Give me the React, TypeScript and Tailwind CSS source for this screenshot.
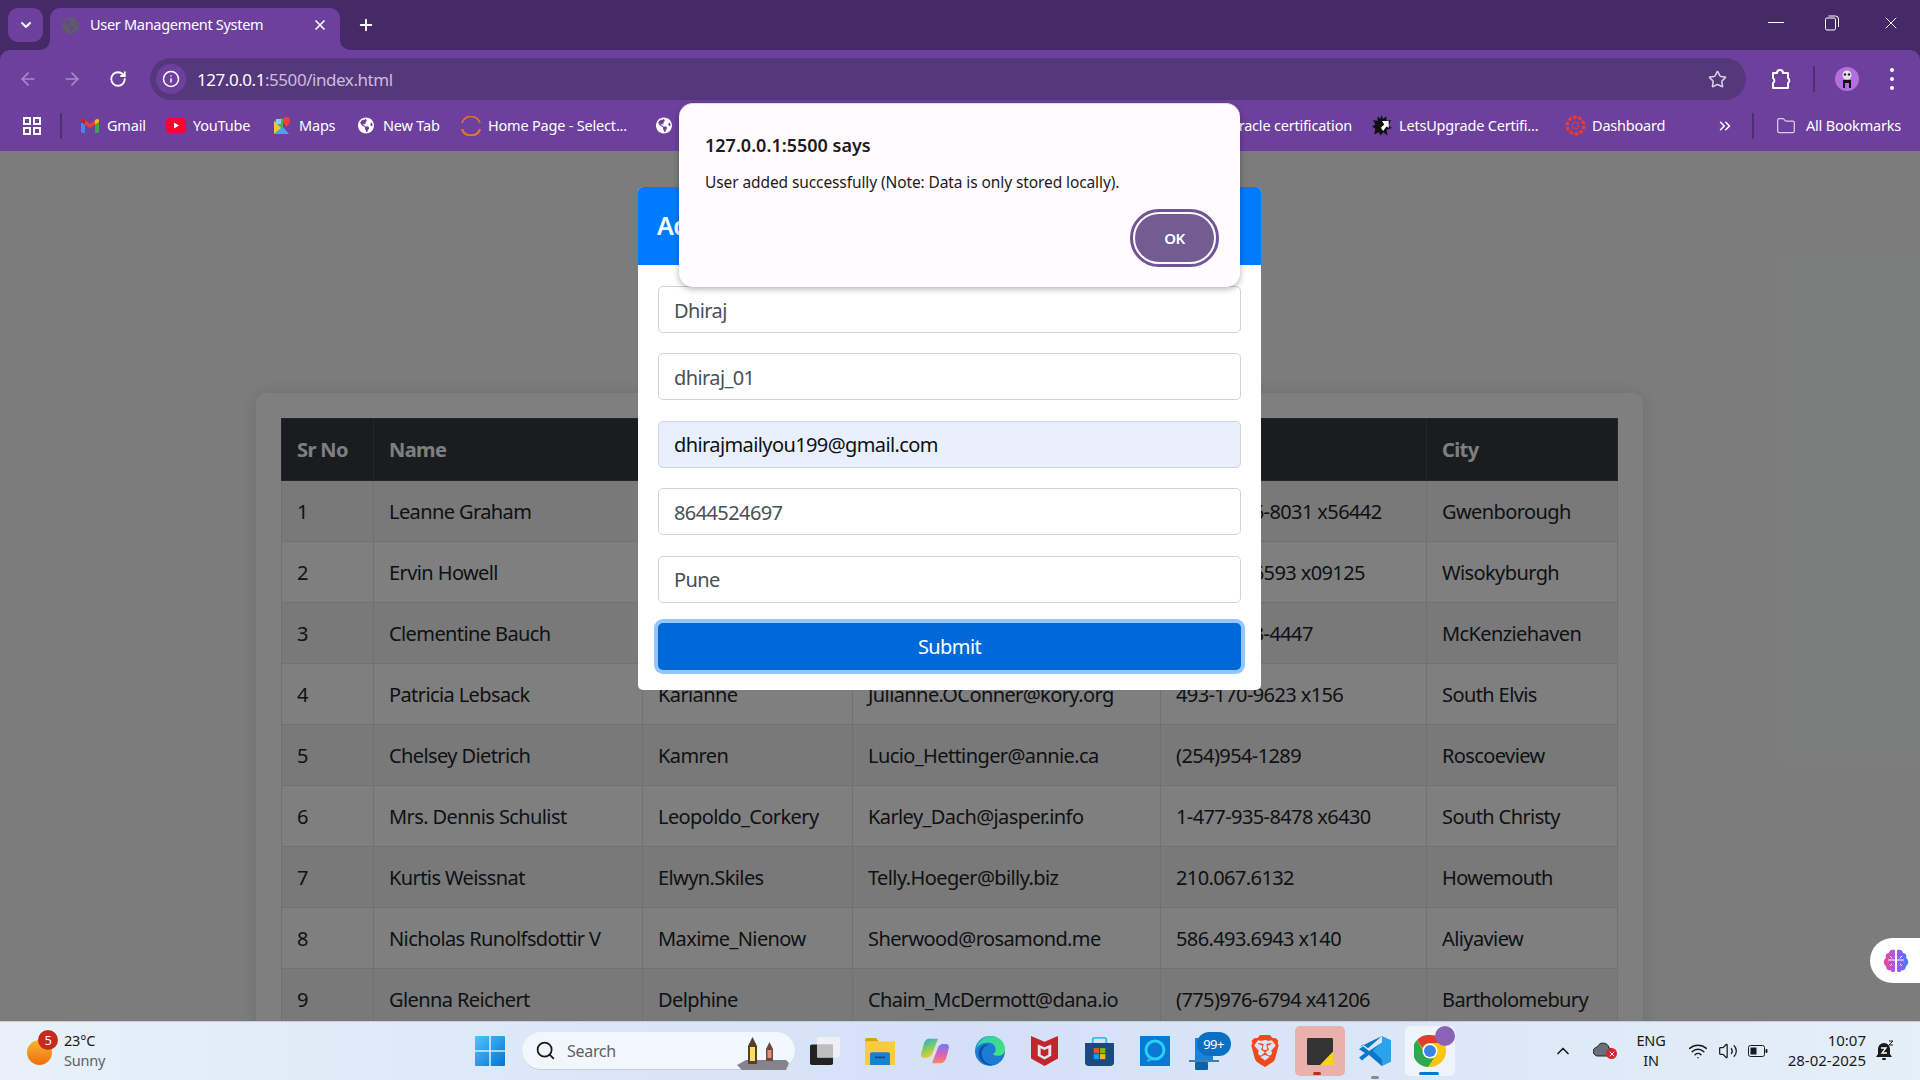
import React from "react";
import {
  ArrowLeft,
  ArrowRight,
  ChevronDown,
  ChevronUp,
  ChevronsRight,
  Folder,
  Info,
  Plus,
  RotateCw,
  Search,
  Star,
  Volume2,
  Wifi,
  X,
} from "lucide-react";
import { FaGlobeAmericas } from "react-icons/fa";
import { SiBrave } from "react-icons/si";

const rows = [
  ["1", "Leanne Graham", "Bret", "Sincere@april.biz", "1-770-736-8031 x56442", "Gwenborough"],
  ["2", "Ervin Howell", "Antonette", "Shanna@melissa.tv", "010-692-6593 x09125", "Wisokyburgh"],
  ["3", "Clementine Bauch", "Samantha", "Nathan@yesenia.net", "1-463-123-4447", "McKenziehaven"],
  ["4", "Patricia Lebsack", "Karianne", "Julianne.OConner@kory.org", "493-170-9623 x156", "South Elvis"],
  ["5", "Chelsey Dietrich", "Kamren", "Lucio_Hettinger@annie.ca", "(254)954-1289", "Roscoeview"],
  ["6", "Mrs. Dennis Schulist", "Leopoldo_Corkery", "Karley_Dach@jasper.info", "1-477-935-8478 x6430", "South Christy"],
  ["7", "Kurtis Weissnat", "Elwyn.Skiles", "Telly.Hoeger@billy.biz", "210.067.6132", "Howemouth"],
  ["8", "Nicholas Runolfsdottir V", "Maxime_Nienow", "Sherwood@rosamond.me", "586.493.6943 x140", "Aliyaview"],
  ["9", "Glenna Reichert", "Delphine", "Chaim_McDermott@dana.io", "(775)976-6794 x41206", "Bartholomebury"],
];

const headers = ["Sr No", "Name", "Username", "Email", "Phone", "City"];

function Bookmark({ icon, label, className }: { icon: React.ReactNode; label: string; className: string }) {
  return (
    <div className={`flex items-center gap-[9px] shrink-0 ${className}`}>
      <span className="w-4 h-4 flex items-center justify-center shrink-0">{icon}</span>
      <span className="text-[14.5px] tracking-[-0.2px] text-white whitespace-nowrap">{label}</span>
    </div>
  );
}

function Globe({ className = "text-white" }: { className?: string }) {
  return <FaGlobeAmericas size={17} className={className} />;
}

function GmailIcon() {
  return (
    <svg width="18" height="14" viewBox="0 0 18 14" className="shrink-0">
      <path d="M0 3v9.500A1.500 1.500 0 0 0 1.500 14H4V5z" fill="#4285f4" />
      <path d="M14 5v9h2.500a1.500 1.500 0 0 0 1.500-1.500V3z" fill="#34a853" />
      <path d="M4 5.500 9 9l5-3.500V1L9 5 4 1z" fill="#ea4335" />
      <path d="M0 3l4 2.500V1L2.500.2A1.600 1.600 0 0 0 0 1.500z" fill="#c5221f" />
      <path d="M18 3l-4 2.500V1l1.500-.8A1.600 1.600 0 0 1 18 1.500z" fill="#fbbc04" />
    </svg>
  );
}

function YoutubeIcon() {
  return (
    <svg width="20" height="15" viewBox="0 0 20 15" className="shrink-0">
      <rect width="20" height="15" rx="4" fill="#ff0033" />
      <path d="M8 4.500l5 3-5 3z" fill="#fff" />
    </svg>
  );
}

function MapsIcon() {
  return (
    <svg width="18" height="18" viewBox="0 0 18 18" className="shrink-0">
      <path d="M1 4l9-3v16H1z" fill="#4caf50" />
      <path d="M1 4l7 7-7 6z" fill="#fbc02d" />
      <path d="M1 17l9-7 6 7z" fill="#42a5f5" />
      <path d="M3 2h5v5H3z" fill="#90caf9" />
      <path d="M13.500 0a3.600 3.600 0 0 0-3.600 3.600c0 2.600 3.600 6.400 3.600 6.400s3.600-3.800 3.600-6.400A3.600 3.600 0 0 0 13.500 0z" fill="#ea4335" />
    </svg>
  );
}

function SelectIcon() {
  return (
    <svg width="20" height="20" viewBox="0 0 20 20" fill="none" className="shrink-0">
      <path d="M1 7a9.500 9.500 0 0 1 18 0" stroke="#e8742a" strokeWidth="1.600" />
      <path d="M1 13a9.500 9.500 0 0 0 18 0" stroke="#e8742a" strokeWidth="2.200" />
    </svg>
  );
}

function LetsUpgradeIcon() {
  return (
    <svg width="20" height="23" viewBox="0 0 18 20" className="shrink-0">
      <path d="M8 0l2 4 3-2 0 4 4-1-2 5 3 2-5 2 1 5-4-3-2 3-2-3-4 2 1-5-3-2 3-2-2-4 4 1 0-4 3 2z" fill="#111" />
      <path d="M9 6h6v6l-2-1-3 4-2-3 3-3z" fill="#fff" />
    </svg>
  );
}

function DashboardIcon() {
  return (
    <svg width="21" height="21" viewBox="0 0 20 20" fill="none" stroke="#ef3a2c" strokeWidth="3" className="shrink-0">
      <circle cx="10" cy="10" r="8" strokeDasharray="3.500 1.500" />
      <circle cx="10" cy="10" r="3" strokeWidth="1.500" strokeDasharray="2 1" />
    </svg>
  );
}

function ExtensionsIcon() {
  return (
    <svg width="20" height="22" viewBox="0 0 20 22" fill="none" stroke="#fff" strokeWidth="2" strokeLinejoin="round">
      <path d="M2 5h4a3 3 0 0 1 6 0h5v5a3 3 0 0 1 0 5v5H2v-5a3 3 0 0 0 0-5z" />
    </svg>
  );
}

function Avatar() {
  return (
    <div className="w-6 h-6 rounded-full bg-[#b36fe0] flex items-center justify-center">
      <svg width="14" height="18" viewBox="0 0 14 18">
        <circle cx="7" cy="5" r="4.500" fill="#e6e6e6" />
        <circle cx="5" cy="4.500" r="1.200" fill="#222" />
        <circle cx="9" cy="4.500" r="1.200" fill="#222" />
        <path d="M3 10h8v8H9v-5H5v5H3z" fill="#111" />
      </svg>
    </div>
  );
}

function RestoreIcon() {
  return (
    <svg width="14" height="16" viewBox="0 0 14 16" fill="none" stroke="#fff" strokeWidth="1">
      <rect x="0.500" y="3" width="10" height="12" rx="1.500" />
      <path d="M3.500 1h7a3 3 0 0 1 3 3v8" />
    </svg>
  );
}

function WindowsLogo() {
  return (
    <svg width="30" height="30" viewBox="0 0 30 30">
      <defs>
        <linearGradient id="win" x1="0" y1="0" x2="1" y2="1">
          <stop offset="0" stopColor="#4cc5fb" />
          <stop offset="1" stopColor="#0672d3" />
        </linearGradient>
      </defs>
      <path d="M0 1a1 1 0 0 1 1-1h13.200v14.200H0zM15.800 0H29a1 1 0 0 1 1 1v13.200H15.800zM0 15.800h14.200V30H1a1 1 0 0 1-1-1zM15.800 15.800H30V29a1 1 0 0 1-1 1H15.800z" fill="url(#win)" />
    </svg>
  );
}

function Lanterns() {
  return (
    <svg width="56" height="38" viewBox="0 0 56 38">
      <path d="M3 33l9-5h40l3 3-3 7H8z" fill="#85838c" />
      <path d="M14 14l4.500-9 4.500 9v18h-9z" fill="#55402e" />
      <rect x="16" y="15" width="5" height="14" fill="#f9dc6a" />
      <path d="M32 17l3.500-7 3.500 7v12h-7z" fill="#6a4a3c" />
      <rect x="33.500" y="18" width="4" height="8" fill="#ea8a7c" />
    </svg>
  );
}

function TaskViewIcon() {
  return (
    <svg width="30" height="28" viewBox="0 0 30 34" preserveAspectRatio="none">
      <rect x="0" y="9" width="23" height="25" rx="2" fill="#222" />
      <rect x="7" y="0" width="23" height="25" rx="2" fill="#f2f2f2" opacity="0.85" />
      <rect x="7" y="9" width="16" height="16" fill="#bdbdbd" />
    </svg>
  );
}

function ExplorerIcon() {
  return (
    <svg width="30" height="27" viewBox="0 0 30 32" preserveAspectRatio="none">
      <path d="M0 2a2 2 0 0 1 2-2h9l3 4H0z" fill="#dca20b" />
      <path d="M0 4h30v28H0z" fill="#f9cb3f" />
      <path d="M5 19a2 2 0 0 1 2-2h16a2 2 0 0 1 2 2v13H5z" fill="#1a80d0" />
      <rect x="10" y="22" width="10" height="2" fill="#0d4d8c" />
    </svg>
  );
}

function CopilotIcon() {
  return (
    <svg width="28" height="26" viewBox="0 0 28 30" preserveAspectRatio="none">
      <defs>
        <linearGradient id="copA" x1="0" y1="0" x2="0.4" y2="1">
          <stop offset="0" stopColor="#2e9bf0" />
          <stop offset="0.55" stopColor="#7ccf5c" />
          <stop offset="1" stopColor="#f3c83a" />
        </linearGradient>
        <linearGradient id="copB" x1="0.5" y1="0" x2="0.5" y2="1">
          <stop offset="0" stopColor="#6f7df2" />
          <stop offset="0.6" stopColor="#e55fb2" />
          <stop offset="1" stopColor="#f58a5a" />
        </linearGradient>
      </defs>
      <path d="M8 1h9l-5 15c-1 4-3 7-6 7H3c-2 0-3-2-3-4l3-13c1-3 3-5 5-5z" fill="url(#copA)" />
      <path d="M20 29h-9l5-15c1-4 3-7 6-7h3c2 0 3 2 3 4l-3 13c-1 3-3 5-5 5z" fill="url(#copB)" />
    </svg>
  );
}

function EdgeIcon() {
  return (
    <svg width="30" height="30" viewBox="0 0 32 32">
      <defs>
        <linearGradient id="edg" x1="0" y1="0" x2="1" y2="1">
          <stop offset="0" stopColor="#2ecfb0" />
          <stop offset="1" stopColor="#4ce37a" />
        </linearGradient>
      </defs>
      <circle cx="16" cy="16" r="16" fill="#1b7cd6" />
      <path d="M1 14C3 5 10 0 17 0c9 0 15 7 15 14 0 5-4 7-8 7-3 0-5-1-5-2 2-1 3-2 3-5 0-4-4-7-8-7-6 0-11 3-13 7z" fill="url(#edg)" />
      <path d="M15 9c-5 1-8 5-8 10 0 6 5 11 12 12-6 1-13-3-15-10C3 14 8 8 15 9z" fill="#0f4f9c" />
    </svg>
  );
}

function McAfeeIcon() {
  return (
    <svg width="27" height="30" viewBox="0 0 28 32" preserveAspectRatio="none">
      <path d="M0 0l14 6 14-6v24l-14 8-14-8z" fill="#c0272d" />
      <path d="M7 9l7 3 7-3v12l-7 4-7-4z" fill="#dfe8f6" />
      <path d="M10 13l4 2 4-2v7l-4 2-4-2z" fill="#c0272d" />
    </svg>
  );
}

function StoreIcon() {
  return (
    <svg width="29" height="29" viewBox="0 0 30 34" fill="none" preserveAspectRatio="none">
      <path d="M8 8V3a2 2 0 0 1 2-2h10a2 2 0 0 1 2 2v5" stroke="#38bdf0" strokeWidth="2" />
      <path d="M0 7h30v23a4 4 0 0 1-4 4H4a4 4 0 0 1-4-4z" fill="#1c4a80" />
      <rect x="9" y="13" width="5.500" height="6" fill="#f25022" />
      <rect x="15.500" y="13" width="5.500" height="6" fill="#7fba00" />
      <rect x="9" y="20" width="5.500" height="6" fill="#00a4ef" />
      <rect x="15.500" y="20" width="5.500" height="6" fill="#ffb900" />
    </svg>
  );
}

function AlexaIcon() {
  return (
    <svg width="30" height="30" viewBox="0 0 30 30" fill="none">
      <rect width="30" height="30" fill="#0b78d1" />
      <circle cx="15" cy="14" r="9" stroke="#27d0f5" strokeWidth="3" />
      <path d="M8 23l-1 3 5-2" fill="#27d0f5" />
    </svg>
  );
}

function OutlookIcon() {
  return (
    <div className="relative w-[42px] h-[38px]">
      <svg width="30" height="32" viewBox="0 0 30 32" className="absolute left-0 top-[6px]">
        <rect x="6" y="0" width="18" height="22" fill="#1b83d6" />
        <rect x="0" y="22" width="30" height="2" fill="#3c7fb0" />
        <rect x="6" y="24" width="13" height="8" rx="1" fill="#0e62ad" />
      </svg>
      <span className="absolute right-0 top-0 h-6 w-[34px] rounded-full bg-[#0b6fc4] text-white text-[13px] leading-6 text-center">
        99+
      </span>
    </div>
  );
}

function StickyIcon() {
  return (
    <svg width="26" height="27" viewBox="0 0 26 32" preserveAspectRatio="none">
      <rect width="26" height="32" rx="1.500" fill="#333" />
      <path d="M26 16v16H13z" fill="#f7d21d" />
    </svg>
  );
}

function VsCodeIcon() {
  return (
    <svg width="32" height="30" viewBox="0 0 32 32" preserveAspectRatio="none">
      <path d="M23 0l9 4.500v23L23 32 10 20l13-13V0z" fill="#2aa3ea" />
      <path d="M23 0v7L10 16 4 11 0 14l6 4-6 5 3 3 7-6 13 12 0-7-9-9 9-9V0L9 13 4 9 0 12" fill="#0a78c9" />
    </svg>
  );
}

function ChromeIcon() {
  return (
    <svg width="32" height="32" viewBox="0 0 32 32">
      <circle cx="16" cy="16" r="16" fill="#f8c513" />
      <path d="M16 0a16 16 0 0 1 13.900 8H16a8 8 0 0 0-7.500 5L3 5a16 16 0 0 1 13-5z" fill="#e33b2e" />
      <path d="M3 5l8 14a8 8 0 0 0 9 4l-6 9A16 16 0 0 1 3 5z" fill="#2da94f" />
      <circle cx="16" cy="16" r="7.500" fill="#fff" />
      <circle cx="16" cy="16" r="6" fill="#3b82e6" />
    </svg>
  );
}

function WeatherIcon() {
  return (
    <div className="relative w-[26px] h-[30px]">
      <div className="absolute left-0 top-[4px] w-[25px] h-[25px] rounded-full bg-gradient-to-b from-[#f5b62e] to-[#ef6c0d]" />
      <div className="absolute left-[11px] -top-[6px] w-5 h-5 rounded-full bg-[#c42b1c] text-white text-[13px] leading-5 text-center">
        5
      </div>
    </div>
  );
}

function BrainIcon() {
  return (
    <svg width="26" height="26" viewBox="0 0 26 26" fill="none">
      <defs>
        <linearGradient id="brain" x1="0" y1="0" x2="1" y2="0">
          <stop offset="0" stopColor="#ec4899" />
          <stop offset="0.5" stopColor="#a855f7" />
          <stop offset="1" stopColor="#3b82f6" />
        </linearGradient>
      </defs>
      <path d="M12 2C8 1 6 3 6 5 3 5 2 8 3 10c-3 2-3 6 0 8 0 3 2 5 4 4 1 2 4 3 5 1zM14 2c4-1 6 1 6 3 3 0 4 3 3 5 3 2 3 6 0 8 0 3-2 5-4 4-1 2-4 3-5 1z" fill="url(#brain)" />
      <path d="M5 12h7M7 8l2 2M7 18l2-2M14 12h7M19 8l-2 2M19 18l-2-2" stroke="#fff" strokeWidth="1" />
    </svg>
  );
}

function CloudErrorIcon() {
  return (
    <div className="relative w-5 h-5">
      <svg width="20" height="16" viewBox="0 0 20 16" className="absolute top-0 left-0">
        <path d="M5 15a4.500 4.500 0 0 1-.5-9A6 6 0 0 1 16 7a4 4 0 0 1 0 8z" fill="#6b7078" stroke="#222" strokeWidth="1" />
      </svg>
      <div className="absolute -right-1 top-[7px] w-[11px] h-[11px] rounded-full bg-[#d92432] flex items-center justify-center">
        <X size={8} strokeWidth={3} className="text-white" />
      </div>
    </div>
  );
}

function BatteryIcon() {
  return (
    <svg width="20" height="12" viewBox="0 0 20 12" fill="none">
      <rect x="0.500" y="0.500" width="16" height="11" rx="2" stroke="#1a1a1a" />
      <rect x="2.500" y="2.500" width="6" height="7" fill="#1a1a1a" />
      <rect x="17.500" y="4" width="2" height="4" rx="1" fill="#1a1a1a" />
    </svg>
  );
}

function SnoozeBell() {
  return (
    <svg width="20" height="22" viewBox="0 0 20 22">
      <path d="M9 3a6 6 0 0 0-6 6v5l-2 3h16l-2-3V9a6 6 0 0 0-6-6z" fill="#1a1a1a" />
      <rect x="7" y="18" width="4" height="2" rx="1" fill="#1a1a1a" />
      <path d="M6 8h5l-4 5h5" stroke="#fff" strokeWidth="1.300" fill="none" />
      <path d="M14 1h4l-4 4h4" stroke="#1a1a1a" strokeWidth="1" fill="none" />
    </svg>
  );
}

function Slot({ children, className = "" }: { children: React.ReactNode; className?: string }) {
  return <div className={`w-[55px] h-full flex items-center justify-center shrink-0 ${className}`}>{children}</div>;
}

function Field({ value, filled }: { value: string; filled?: boolean }) {
  return (
    <div
      className={`h-[47px] border border-[#ced4da] rounded-[5px] px-[15px] pt-[2px] flex items-center text-[20px] ${
        filled ? "bg-[#e8f0fe] text-[#111]" : "bg-white text-[#495057]"
      }`}
    >
      {value}
    </div>
  );
}

export default function App() {
  return (
    <div className="relative h-screen w-full overflow-hidden flex flex-col font-['Noto_Sans',sans-serif] tracking-[-0.6px] bg-[#462a68]">
      {/* tab strip */}
      <div className="h-[50px] shrink-0 flex items-start pl-2 text-white">
        <div className="mt-2 w-[35px] h-[34px] rounded-[10px] bg-[#6d409e] flex items-center justify-center">
          <ChevronDown size={16} strokeWidth={3} />
        </div>
        <div className="relative mt-[8px] ml-[7px] w-[290px] h-[42px] rounded-t-[10px] bg-[#6d409e] flex items-center pl-[12px] pr-[12px] pb-[8px]">
          <FaGlobeAmericas size={17} className="text-[#5b5f63] shrink-0" />
          <span className="ml-[11px] text-[14.5px] tracking-[-0.3px] flex-1 whitespace-nowrap">User Management System</span>
          <X size={16} strokeWidth={2.5} />
          <div className="absolute -right-[10px] bottom-0 w-[10px] h-[10px] bg-[#6d409e]">
            <div className="w-full h-full rounded-bl-[10px] bg-[#462a68]" />
          </div>
          <div className="absolute -left-[10px] bottom-0 w-[10px] h-[10px] bg-[#6d409e]">
            <div className="w-full h-full rounded-br-[10px] bg-[#462a68]" />
          </div>
        </div>
        <div className="mt-[16px] ml-[17px]">
          <Plus size={18} strokeWidth={2.5} />
        </div>
        <div className="ml-auto flex items-start mt-[14px] pr-[19px]">
          <div className="w-[16px] h-[1px] mt-[8px] bg-white" />
          <div className="ml-[41px] mt-[1px]">
            <RestoreIcon />
          </div>
          <div className="ml-[42px]">
            <X size={20} strokeWidth={1.2} className="-mt-[1px]" />
          </div>
        </div>
      </div>

      {/* toolbar */}
      <div className="h-[58px] shrink-0 bg-[#6d409e] rounded-t-[10px] flex items-start pt-2 text-white">
        <div className="w-[150px] h-[42px] flex items-center pl-[18px]">
          <ArrowLeft size={20} className="text-[#a88cc8]" />
          <ArrowRight size={20} className="ml-[24px] text-[#a88cc8]" />
          <RotateCw size={18} strokeWidth={2.4} className="ml-[27px]" />
        </div>
        <div className="w-[1596px] h-[42px] rounded-full bg-[#55377b] flex items-center pl-[6px] pr-[19px]">
          <div className="w-[30px] h-[30px] rounded-full bg-[#6d409e] flex items-center justify-center">
            <Info size={18} />
          </div>
          <div className="ml-[11px] text-[17px] tracking-[-0.45px] flex-1 whitespace-nowrap pt-[1px]">
            127.0.0.1<span className="text-[#cbbedb]">:5500/index.html</span>
          </div>
          <Star size={19} className="text-[#d9d0e3]" />
        </div>
        <div className="flex-1 h-[42px] flex items-center pl-[25px]">
          <ExtensionsIcon />
          <div className="ml-[22px] w-[2px] h-[26px] bg-[#4d2f74]" />
          <div className="ml-[20px]">
            <Avatar />
          </div>
          <div className="ml-[31px] flex flex-col gap-[5px]">
            <div className="w-1 h-1 rounded-full bg-white" />
            <div className="w-1 h-1 rounded-full bg-white" />
            <div className="w-1 h-1 rounded-full bg-white" />
          </div>
        </div>
      </div>

      {/* bookmarks */}
      <div className="h-[43px] shrink-0 bg-[#6d409e] flex items-center pb-[8px] text-white">
        <div className="ml-[23px] w-[18px] h-[18px] grid grid-cols-2 gap-[2px]">
          <div className="border-2 border-white" />
          <div className="border-2 border-white" />
          <div className="border-2 border-white" />
          <div className="border-2 border-white" />
        </div>
        <div className="ml-[19px] w-[2px] h-[26px] bg-[#4d2f74]" />
        <div className="ml-[20px] flex items-center">
          <Bookmark icon={<GmailIcon />} label="Gmail" className="w-[86px]" />
          <Bookmark icon={<YoutubeIcon />} label="YouTube" className="w-[106px]" />
          <Bookmark icon={<MapsIcon />} label="Maps" className="w-[84px]" />
          <Bookmark icon={<Globe />} label="New Tab" className="w-[105px]" />
          <Bookmark icon={<SelectIcon />} label="Home Page - Select..." className="w-[193px]" />
          <Bookmark icon={<Globe />} label="" className="w-[40px]" />
        </div>
        <div className="ml-auto flex items-center pr-[19px]">
          <span className="text-[14.5px] tracking-[-0.2px] whitespace-nowrap mr-[22px]">Oracle certification</span>
          <Bookmark icon={<LetsUpgradeIcon />} label="LetsUpgrade Certifi..." className="w-[193px]" />
          <Bookmark icon={<DashboardIcon />} label="Dashboard" className="w-[143px]" />
          <div className="w-[30px] flex justify-center">
            <ChevronsRight size={18} />
          </div>
          <div className="ml-[12px] w-[2px] h-[26px] bg-[#4d2f74]" />
          <div className="ml-[22px] flex items-center gap-[10px]">
            <Folder size={20} strokeWidth={1.5} className="text-[#d9d0e3]" />
            <span className="text-[14.5px] tracking-[-0.2px] whitespace-nowrap">All Bookmarks</span>
          </div>
        </div>
      </div>

      {/* page */}
      <div className="relative flex-1 min-h-0 overflow-hidden bg-[#f8f9fa]">
        <div className="mt-[242px] ml-[256px] w-[1387px] bg-white rounded-[10px] p-[25px] shadow-[0_0_18px_rgba(0,0,0,0.12)]">
          <table className="w-[1336px] table-fixed border-collapse text-[20px] text-[#212529]">
            <colgroup>
              <col className="w-[92px]" />
              <col className="w-[269px]" />
              <col className="w-[210px]" />
              <col className="w-[308px]" />
              <col className="w-[266px]" />
              <col className="w-[191px]" />
            </colgroup>
            <thead>
              <tr className="bg-[#343a40] text-white h-[62px]">
                {headers.map((h) => (
                  <th key={h} className="px-[15px] text-left font-bold border border-[#454d55] whitespace-nowrap">
                    {h}
                  </th>
                ))}
              </tr>
            </thead>
            <tbody>
              {rows.map((row, i) => (
                <tr key={row[0]} className={`h-[61px] ${i % 2 === 0 ? "bg-[#f2f2f2]" : "bg-white"}`}>
                  {row.map((cell, j) => (
                    <td key={j} className="px-[15px] pt-[2px] border border-[#dee2e6] whitespace-nowrap">
                      {cell}
                    </td>
                  ))}
                </tr>
              ))}
            </tbody>
          </table>
        </div>

        {/* backdrop */}
        <div className="absolute inset-0 bg-black/50" />

        {/* side widget */}
        <div className="absolute right-0 bottom-[38px] w-[50px] h-[45px] rounded-l-full bg-white flex items-center pl-[13px]">
          <BrainIcon />
        </div>

        {/* add user modal */}
        <div className="absolute left-[638px] top-[36px] w-[623px] bg-white rounded-[5px] overflow-hidden">
          <div className="h-[78px] bg-[#007bff] text-white flex items-center px-[19px] text-[25px] font-semibold">Add User</div>
          <div className="px-[20px] pt-[21px] pb-[20px] flex flex-col gap-[20.4px]">
            <Field value="Dhiraj" />
            <Field value="dhiraj_01" />
            <Field value="dhirajmailyou199@gmail.com" filled />
            <Field value="8644524697" />
            <Field value="Pune" />
            <div className="h-[47px] rounded-[5px] bg-[#0069d9] text-white text-[20px] pt-[2px] flex items-center justify-center shadow-[0_0_0_4px_#92c7ff]">
              Submit
            </div>
          </div>
        </div>
      </div>

      {/* taskbar */}
      <div className="h-[59px] shrink-0 flex items-center border-t border-[#c9ced6] bg-gradient-to-r from-[#e8f1f9] via-[#d3e0f7] to-[#e5eff8] text-[#1a1a1a]">
        <div className="ml-[27px] w-[435px] flex items-center">
          <WeatherIcon />
          <div className="ml-[11px] text-[14.5px] leading-[20px] tracking-[-0.2px] -mt-[2px]">
            <div>23°C</div>
            <div className="text-[#5d6168]">Sunny</div>
          </div>
        </div>
        <Slot>
          <WindowsLogo />
        </Slot>
        <div className="ml-[5px] w-[273px] h-[38px] rounded-full bg-[#f2f6fd] border-b border-[#c4cbdc] flex items-center pl-[13px] pr-[5px] text-[#5d6168]">
          <Search size={21} strokeWidth={2} className="text-[#1a1a1a]" />
          <span className="ml-[11px] text-[16px] tracking-[-0.3px] flex-1">Search</span>
          <Lanterns />
        </div>
        <div className="ml-[2px] h-full flex items-center">
          <Slot>
            <TaskViewIcon />
          </Slot>
          <Slot>
            <ExplorerIcon />
          </Slot>
          <Slot>
            <CopilotIcon />
          </Slot>
          <Slot>
            <EdgeIcon />
          </Slot>
          <Slot>
            <McAfeeIcon />
          </Slot>
          <Slot>
            <StoreIcon />
          </Slot>
          <Slot>
            <AlexaIcon />
          </Slot>
          <Slot>
            <OutlookIcon />
          </Slot>
          <Slot>
            <div className="text-[#f0481d]">
              <SiBrave size={32} />
            </div>
          </Slot>
          <Slot>
            <div className="relative w-[50px] h-[50px] rounded-[5px] bg-[#e9b0ac] flex items-center justify-center">
              <StickyIcon />
              <div className="absolute bottom-[1px] left-[18px] w-[8px] h-[3px] rounded-full bg-[#c42b1c]" />
            </div>
          </Slot>
          <Slot>
            <div className="relative h-full flex items-center">
              <VsCodeIcon />
              <div className="absolute bottom-[1px] left-[12px] w-[8px] h-[3px] rounded-full bg-[#858a93]" />
            </div>
          </Slot>
          <Slot>
            <div className="relative w-[50px] h-[50px] rounded-[5px] bg-[#eff4fc] flex items-center justify-center">
              <ChromeIcon />
              <div className="absolute right-0 top-0 w-[20px] h-[20px] rounded-full bg-[#8a63b5]" />
              <div className="absolute bottom-[1px] left-[14px] w-[20px] h-[3px] rounded-full bg-[#0078d4]" />
            </div>
          </Slot>
        </div>
        <div className="ml-auto flex items-center h-full pr-[20px]">
          <div className="w-[30px] flex justify-center">
            <ChevronUp size={20} />
          </div>
          <div className="ml-[10px] w-[30px] flex justify-center">
            <CloudErrorIcon />
          </div>
          <div className="ml-[12px] w-[42px] text-center text-[14.5px] leading-[20px] tracking-[-0.2px] -mt-[2px]">
            <div>ENG</div>
            <div>IN</div>
          </div>
          <div className="ml-[11px] w-[30px] flex justify-center">
            <Wifi size={20} strokeWidth={1.8} />
          </div>
          <div className="w-[30px] flex justify-center">
            <Volume2 size={20} strokeWidth={1.5} />
          </div>
          <div className="w-[30px] flex justify-center">
            <BatteryIcon />
          </div>
          <div className="w-[97px] pr-[4px] text-right text-[15px] leading-[20px] tracking-[0px] -mt-[3px] whitespace-nowrap">
            <div>10:07</div>
            <div>28-02-2025</div>
          </div>
          <div className="w-[30px] flex justify-center">
            <SnoozeBell />
          </div>
        </div>
      </div>

      {/* alert dialog */}
      <div className="absolute left-[679px] top-[103px] w-[561px] h-[184px] rounded-[14px] bg-[#fffbff] shadow-[0_2px_6px_rgba(0,0,0,0.3)] border-t border-[#e3d5ee] pl-[26px] pt-[28px] text-[#1d1b20]">
        <div className="text-[18px] leading-[26px] font-semibold tracking-[0px]">127.0.0.1:5500 says</div>
        <div className="mt-[13px] text-[15.5px] leading-[22px] tracking-[-0.1px]">User added successfully (Note: Data is only stored locally).</div>
        <div className="absolute left-[451px] top-[105px] w-[89px] h-[58px] rounded-full border-[3px] border-[#6f5496] p-[2px]">
          <div className="w-full h-full rounded-full bg-[#735c91] text-white text-[15px] font-semibold flex items-center justify-center">
            OK
          </div>
        </div>
      </div>
    </div>
  );
}
